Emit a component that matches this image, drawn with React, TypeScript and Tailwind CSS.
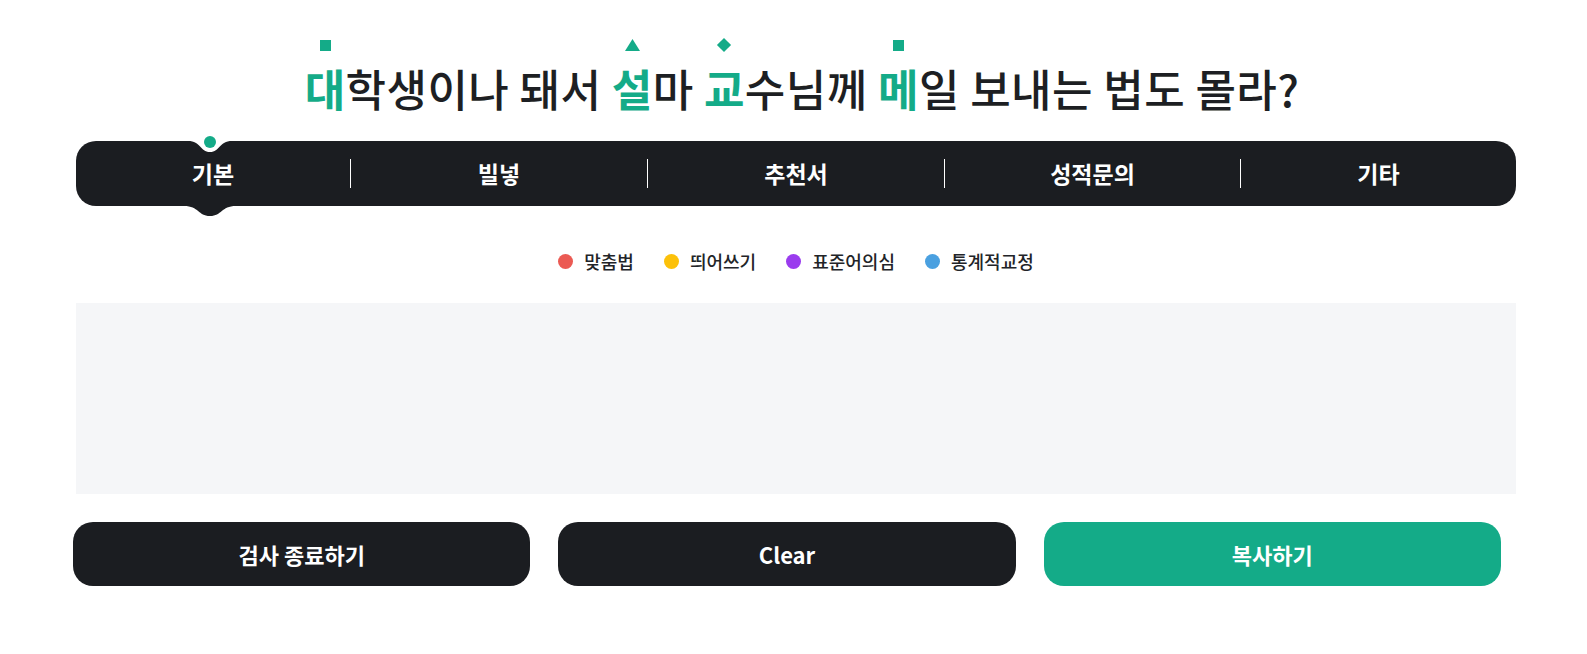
import React from "react";

const GREEN = "#14ab88";

function Mark({ ch, shape }: { ch: string; shape: "square" | "triangle" | "diamond" }) {
  return (
    <span className="relative inline-block text-[#14ab88] font-semibold">
      {ch}
      <span className="absolute left-1/2 top-[-23px] -translate-x-1/2 flex items-center justify-center w-[16px] h-[12px]">
        {shape === "square" && <span className="block w-[11px] h-[11px] bg-[#14ab88]" />}
        {shape === "triangle" && (
          <svg width="15" height="12" viewBox="0 0 15 12">
            <polygon points="7.5,0 15,12 0,12" fill={GREEN} />
          </svg>
        )}
        {shape === "diamond" && <span className="block w-[10px] h-[10px] bg-[#14ab88] rotate-45" />}
      </span>
    </span>
  );
}

function Divider() {
  return <span className="block w-px h-[29px] bg-white shrink-0" />;
}

function Tab({ label, className }: { label: string; className: string }) {
  return (
    <div className={`flex items-center justify-center h-full text-white text-[23px] font-bold ${className}`}>
      {label}
    </div>
  );
}

function Legend({ color, label }: { color: string; label: string }) {
  return (
    <div className="flex items-center gap-[11px]">
      <span className={`block w-[15px] h-[15px] rounded-full ${color}`} />
      <span className="text-[18px] font-medium text-[#222428]">{label}</span>
    </div>
  );
}

export default function App() {
  return (
    <div
      className="w-[1587px] h-[654px] bg-white overflow-hidden"
      style={{ fontFamily: '"Noto Sans CJK KR", "Noto Sans", sans-serif' }}
    >
      <div className="pt-[62px] flex justify-center pl-[17px]">
        <h1 className="text-[44px] leading-[52px] font-medium text-[#1d1f23] tracking-[0.01em] whitespace-nowrap">
          <Mark ch="대" shape="square" />학생이나 돼서 <Mark ch="설" shape="triangle" />마{" "}
          <Mark ch="교" shape="diamond" />수님께 <Mark ch="메" shape="square" />일 보내는 법도 몰라?
        </h1>
      </div>

      <div className="ml-[76px] w-[1440px] mt-[27px]">
        <div className="relative h-[65px] rounded-[20px] bg-[#1b1d21] flex items-center">
          <svg className="absolute left-[112px] top-0" width="44" height="12" viewBox="0 0 44 12">
            <path d="M0 0 C13 0 12 11 22 11 C32 11 31 0 44 0 Z" fill="#ffffff" />
          </svg>
          <span className="absolute left-[128px] top-[-5px] w-[12px] h-[12px] rounded-full bg-[#14ab88]" />
          <svg className="absolute left-[108px] top-[65px]" width="52" height="10" viewBox="0 0 52 10">
            <path d="M0 0 C15 0 14 10 26 10 C38 10 37 0 52 0 Z" fill="#1b1d21" />
          </svg>
          <Tab label="기본" className="w-[274px] shrink-0" />
          <Divider />
          <Tab label="빌넣" className="w-[296px] shrink-0" />
          <Divider />
          <Tab label="추천서" className="w-[296px] shrink-0" />
          <Divider />
          <Tab label="성적문의" className="w-[295px] shrink-0" />
          <Divider />
          <Tab label="기타" className="flex-1" />
        </div>

        <div className="mt-[43px] h-[24px] flex items-center justify-center gap-[30px]">
          <Legend color="bg-[#eb5a53]" label="맞춤법" />
          <Legend color="bg-[#fcc10a]" label="띄어쓰기" />
          <Legend color="bg-[#9a3cee]" label="표준어의심" />
          <Legend color="bg-[#4aa0e0]" label="통계적교정" />
        </div>

        <div className="mt-[30px] h-[191px] bg-[#f5f6f8]" />
      </div>

      <div className="ml-[73px] w-[1428px] mt-[28px] flex gap-[28px]">
        <button className="flex-1 h-[64px] rounded-[20px] bg-[#1b1d21] text-white text-[22px] font-bold">
          검사 종료하기
        </button>
        <button className="flex-1 h-[64px] rounded-[20px] bg-[#1b1d21] text-white text-[22px] font-bold">
          Clear
        </button>
        <button className="flex-1 h-[64px] rounded-[20px] bg-[#14ab88] text-white text-[22px] font-bold">
          복사하기
        </button>
      </div>
    </div>
  );
}
